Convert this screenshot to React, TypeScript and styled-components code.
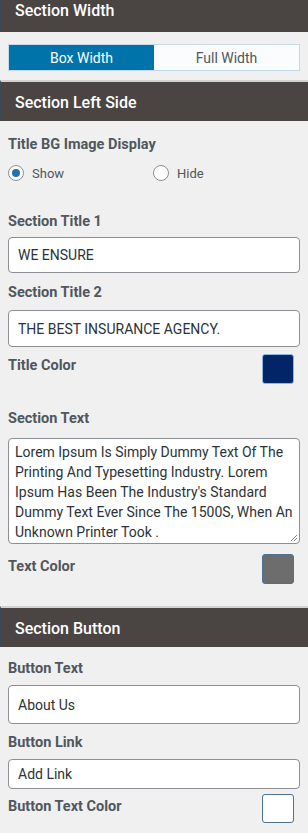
import React from 'react';
import styled, { createGlobalStyle } from 'styled-components';

const Global = createGlobalStyle`
  html, body {
    margin: 0;
    padding: 0;
    background: #f0f0f0;
    font-family: Roboto, "Liberation Sans", sans-serif;
  }
`;

const Panel = styled.div`
  width: 308px;
  background: #f0f0f0;
  padding-bottom: 12px;
`;

const SectionHeader = styled.div<{ $first?: boolean }>`
  background: #4a4543;
  color: #fff;
  font-size: 16px;
  font-weight: 500;
  border-left: 1px solid #3b4a57;
  padding: ${(p) => (p.$first ? '0 14px 10px' : '10px 14px 10px')};
  line-height: ${(p) => (p.$first ? '22px' : '21px')};
  height: ${(p) => (p.$first ? '32px' : '41px')};
  box-sizing: border-box;
  border-top: ${(p) => (p.$first ? 'none' : '2px solid #d2d2d2')};
`;

const Body = styled.div`
  padding: 0 8px;
`;

const Divider = styled.div`
  padding-top: 22px;
`;

const Toggle = styled.div`
  display: flex;
  height: 27px;
  margin: 12px 0 9px;
  border: 1px solid #c5d9ed;
  box-sizing: border-box;
  background: #fafcfe;
`;

const ToggleBtn = styled.div<{ $active?: boolean }>`
  flex: 1;
  display: flex;
  align-items: center;
  justify-content: center;
  font-size: 14px;
  color: ${(p) => (p.$active ? '#fff' : '#50575e')};
  background: ${(p) => (p.$active ? '#0073aa' : 'transparent')};
`;

const Label = styled.div<{ $mt?: number }>`
  font-size: 14.5px;
  font-weight: 700;
  color: #50575e;
  line-height: 20px;
  margin-top: ${(p) => p.$mt ?? 0}px;
`;

const RadioRow = styled.div`
  display: flex;
  margin-top: 8px;
  height: 20px;
  align-items: center;
`;

const RadioOpt = styled.label`
  display: flex;
  align-items: center;
  width: 145px;
  font-size: 13px;
  color: #50575e;
  gap: 8px;
`;

const RadioDot = styled.span<{ $checked?: boolean }>`
  width: 14px;
  height: 14px;
  border-radius: 50%;
  border: 1px solid #8c8f94;
  background: #fff;
  display: flex;
  align-items: center;
  justify-content: center;

  &::after {
    content: '';
    width: 8px;
    height: 8px;
    border-radius: 50%;
    background: ${(p) => (p.$checked ? '#2271b1' : 'transparent')};
  }
`;

const Input = styled.div<{ $h: number; $mt?: number }>`
  height: ${(p) => p.$h}px;
  margin-top: ${(p) => p.$mt ?? 7}px;
  box-sizing: border-box;
  background: #fff;
  border: 1px solid #8c8f94;
  border-radius: 4px;
  padding: 0 9px;
  display: flex;
  align-items: center;
  font-size: 14px;
  color: #2c3338;
`;

const TextArea = styled.div`
  position: relative;
  height: 106px;
  margin-top: 9px;
  box-sizing: border-box;
  background: #fff;
  border: 1px solid #8c8f94;
  border-radius: 4px;
  padding: 3px 6px;
  font-size: 14px;
  line-height: 20px;
  color: #2c3338;
  overflow: hidden;
`;

const Grip = styled.svg`
  position: absolute;
  right: 1px;
  bottom: 1px;
`;

const ColorRow = styled.div<{ $mt: number }>`
  display: flex;
  justify-content: space-between;
  align-items: flex-start;
  margin-top: ${(p) => p.$mt}px;
  padding-right: 6px;
`;

const Swatch = styled.div<{ $color: string; $border: string; $h?: number }>`
  width: 32px;
  height: ${(p) => p.$h ?? 30}px;
  box-sizing: border-box;
  border-radius: 3px;
  background: ${(p) => p.$color};
  border: 1px solid ${(p) => p.$border};
`;

export default function App() {
  return (
    <Panel>
      <Global />
      <SectionHeader $first>Section Width</SectionHeader>
      <Body>
        <Toggle>
          <ToggleBtn $active>Box Width</ToggleBtn>
          <ToggleBtn>Full Width</ToggleBtn>
        </Toggle>
      </Body>
      <SectionHeader>Section Left Side</SectionHeader>
      <Body>
        <Label $mt={14}>Title BG Image Display</Label>
        <RadioRow>
          <RadioOpt>
            <RadioDot $checked />
            Show
          </RadioOpt>
          <RadioOpt>
            <RadioDot />
            Hide
          </RadioOpt>
        </RadioRow>
        <Label $mt={29}>Section Title 1</Label>
        <Input $h={36} $mt={5}>WE ENSURE</Input>
        <Label $mt={10}>Section Title 2</Label>
        <Input $h={37}>THE BEST INSURANCE AGENCY.</Input>
        <ColorRow $mt={7}>
          <Label $mt={2}>Title Color</Label>
          <Swatch $color="#012566" $border="#8fb8e0" />
        </ColorRow>
        <Label $mt={25}>Section Text</Label>
        <TextArea>
          Lorem Ipsum Is Simply Dummy Text Of The Printing And Typesetting Industry. Lorem Ipsum
          Has Been The Industry's Standard Dummy Text Ever Since The 1500S, When An Unknown
          Printer Took .
          <Grip width="8" height="8" viewBox="0 0 8 8">
            <path d="M7 1 L1 7 M7 4 L4 7" stroke="#888" strokeWidth="1" />
          </Grip>
        </TextArea>
        <ColorRow $mt={10}>
          <Label $mt={3}>Text Color</Label>
          <Swatch $color="#6d6d6d" $border="#4b7294" />
        </ColorRow>
      </Body>
      <Divider>
        <SectionHeader>Section Button</SectionHeader>
      </Divider>
      <Body>
        <Label $mt={12}>Button Text</Label>
        <Input $h={39} $mt={6}>About Us</Input>
        <Label $mt={9}>Button Link</Label>
        <Input $h={30} $mt={6}>Add Link</Input>
        <ColorRow $mt={5}>
          <Label $mt={3}>Button Text Color</Label>
          <Swatch $color="#ffffff" $border="#4b7294" $h={29} />
        </ColorRow>
      </Body>
    </Panel>
  );
}
